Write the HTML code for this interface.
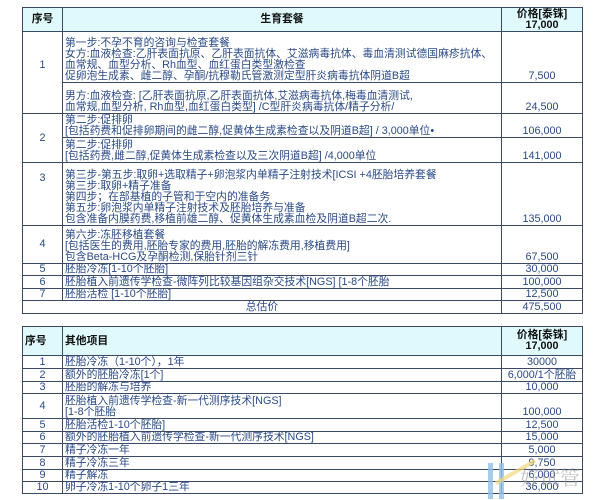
<!DOCTYPE html>
<html><head><meta charset="utf-8"><style>
body{margin:0;width:600px;height:500px;background:#fff;position:relative;overflow:hidden;font-family:"Liberation Sans","Noto Sans CJK SC",sans-serif;}
table{position:absolute;left:22px;width:560px;border-collapse:collapse;table-layout:fixed;font-size:10.8px;color:#2a4a86;}
td{border:1.3px solid #3a4a66;padding:0 2px;line-height:11px;overflow:hidden;white-space:nowrap;}
.h td{background:#dff9fd;color:#111;font-weight:bold;text-align:center;}
.c{text-align:center;}
.p{text-align:center;vertical-align:bottom;}
.t{vertical-align:bottom;}
</style></head><body>
<table style="top:7px">
<colgroup><col style="width:40px"><col style="width:439px"><col style="width:81px"></colgroup>
<tr class="h" style="height:24px"><td>序号</td><td>生育套餐</td><td>价格[泰铢]<br>17,000</td></tr>
<tr style="height:51px"><td class="c" rowspan="2" style="vertical-align:top;padding-top:28px">1</td><td class="t">第一步:不孕不育的咨询与检查套餐<br>女方:血液检查:乙肝表面抗原、乙肝表面抗体、艾滋病毒抗体、毒血清测试德国麻疹抗体、<br>血常规、血型分析、Rh血型、血红蛋白类型激检查<br>促卵泡生成素、雌二醇、孕酮/抗穆勒氏管激测定型肝炎病毒抗体阴道B超</td><td class="p">7,500</td></tr>
<tr style="height:31px"><td class="t">男方:血液检查: [乙肝表面抗原,乙肝表面抗体,艾滋病毒抗体,梅毒血清测试,<br>血常规,血型分析, Rh血型,血红蛋白类型] /C型肝炎病毒抗体/精子分析/</td><td class="p">24,500</td></tr>
<tr style="height:24px"><td class="c" rowspan="2">2</td><td class="t">第二步:促排卵<br>[包括药费和促排卵期间的雌二醇,促黄体生成素检查以及阴道B超] / 3,000单位•</td><td class="p">106,000</td></tr>
<tr style="height:25px"><td class="t">第二步:促排卵<br>[包括药费,雌二醇,促黄体生成素检查以及三次阴道B超] /4,000单位</td><td class="p">141,000</td></tr>
<tr style="height:63px"><td class="c" style="vertical-align:top;padding-top:10px">3</td><td class="t">第三步-第五步:取卵+选取精子+卵泡浆内单精子注射技术[ICSI +4胚胎培养套餐<br>第三步:取卵+精子准备<br>第四步；在部基植的子管和于空内的准备务<br>第五步:卵泡浆内单精子注射技术及胚胎培养与准备<br>包含准备内膜药费,移植前雄二醇、促黄体生成素血检及阴道B超二次.</td><td class="p">135,000</td></tr>
<tr style="height:38px"><td class="c">4</td><td class="t">第六步:冻胚移植套餐<br>[包括医生的费用,胚胎专家的费用,胚胎的解冻费用,移植费用]<br>包含Beta-HCG及孕酮检测,保胎针剂三针</td><td class="p">67,500</td></tr>
<tr style="height:12px"><td class="c">5</td><td>胚胎冷冻[1-10个胚胎]</td><td class="p">30,000</td></tr>
<tr style="height:13px"><td class="c">6</td><td>胚胎植入前遗传学检查-微阵列比较基因组杂交技术[NGS] [1-8个胚胎</td><td class="p">100,000</td></tr>
<tr style="height:12px"><td class="c">7</td><td>胚胎活检 [1-10个胚胎]</td><td class="p">12,500</td></tr>
<tr style="height:13px"><td class="c" colspan="2">总估价</td><td class="p">475,500</td></tr>
</table>
<table style="top:326px">
<colgroup><col style="width:40px"><col style="width:439px"><col style="width:81px"></colgroup>
<tr class="h" style="height:29px"><td style="text-align:left">序号</td><td style="text-align:left">其他项目</td><td>价格[泰铢]<br>17,000</td></tr>
<tr style="height:13px"><td class="c">1</td><td>胚胎冷冻（1-10个），1年</td><td class="p">30000</td></tr>
<tr style="height:13px"><td class="c">2</td><td>额外的胚胎冷冻[1个]</td><td class="p">6,000/1个胚胎</td></tr>
<tr style="height:12px"><td class="c">3</td><td>胚胎的解冻与培养</td><td class="p">10,000</td></tr>
<tr style="height:25px"><td class="c">4</td><td class="t">胚胎植入前遗传学检查-新一代测序技术[NGS]<br>[1-8个胚胎</td><td class="p">100,000</td></tr>
<tr style="height:13px"><td class="c">5</td><td>胚胎活检1-10个胚胎]</td><td class="p">12,500</td></tr>
<tr style="height:12px"><td class="c">6</td><td>额外的胚胎植入前遗传学检查-新一代测序技术[NGS]</td><td class="p">15,000</td></tr>
<tr style="height:13px"><td class="c">7</td><td>精子冷冻一年</td><td class="p">5,000</td></tr>
<tr style="height:13px"><td class="c">8</td><td>精子冷冻三年</td><td class="p">9,750</td></tr>
<tr style="height:12px"><td class="c">9</td><td>精子解冻</td><td class="p">6,000</td></tr>
<tr style="height:12px"><td class="c">10</td><td>卵子冷冻1-10个卵子1三年</td><td class="p">36,000</td></tr>
</table>
<div style="position:absolute;left:488px;top:463px;width:5px;height:36px;background:#8fbfe6;opacity:.8"></div>
<div style="position:absolute;left:499px;top:463px;width:5px;height:36px;background:#8fbfe6;opacity:.8"></div>
<div style="position:absolute;left:493px;top:470px;width:45px;height:4px;background:#f2d97a;opacity:.7;transform:rotate(-30deg)"></div>
<div style="position:absolute;left:520px;top:462px;font-size:20px;color:#999;opacity:.6;font-family:'Noto Serif CJK SC',serif">好试管</div>
</body></html>
